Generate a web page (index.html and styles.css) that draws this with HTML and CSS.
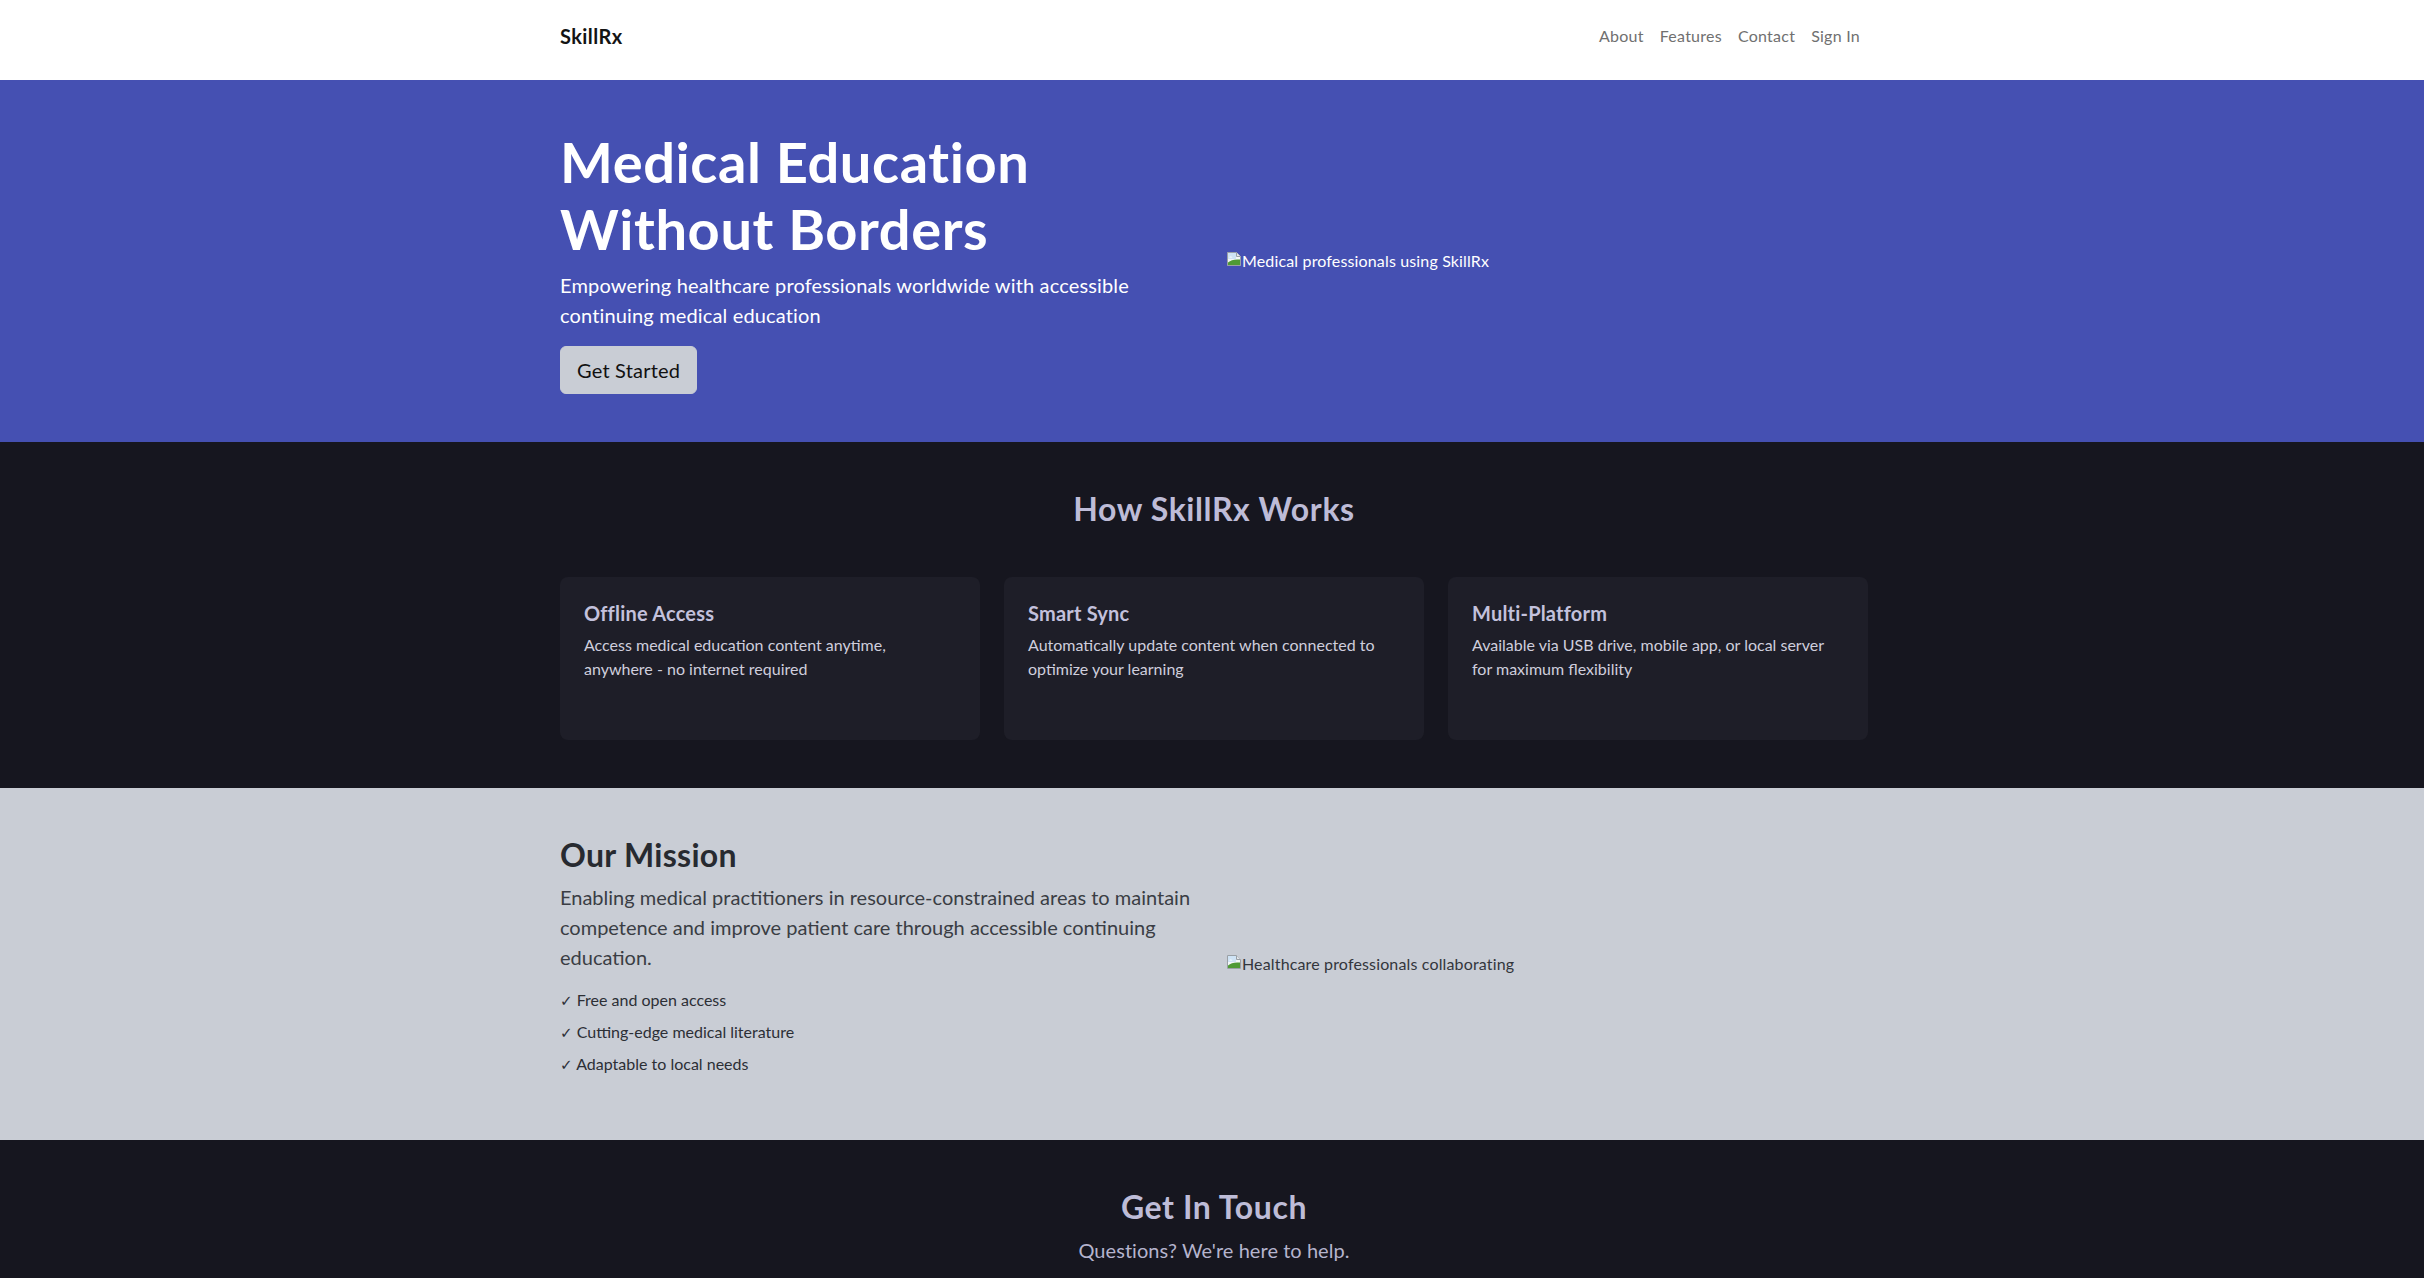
FILE: index.html
```html
<!DOCTYPE html>
<html lang="en">
<head>
<meta charset="utf-8">
<title>SkillRx</title>
<link rel="stylesheet" href="styles.css">
</head>
<body>
<nav class="navbar">
  <div class="container nav-inner">
    <a class="brand" href="#">SkillRx</a>
    <div class="nav-links">
      <a class="nav-link" href="#">About</a>
      <a class="nav-link" href="#">Features</a>
      <a class="nav-link" href="#">Contact</a>
      <a class="nav-link" href="#">Sign In</a>
    </div>
  </div>
</nav>

<section class="hero">
  <div class="container split">
    <div class="col">
      <h1 class="hero-title">Medical Education Without Borders</h1>
      <p class="lead hero-lead">Empowering healthcare professionals worldwide with accessible continuing medical education</p>
      <a class="btn-lg" href="#">Get Started</a>
    </div>
    <div class="col media">
      <span class="broken-img">
        <svg class="broken-icon" width="16" height="16" viewBox="0 0 16 16">
          <path d="M1.5 1.5h9l4 4v9h-13z" fill="#f4f6f8" stroke="#9aa0a6"/>
          <path d="M10.5 1.5v4h4" fill="#e3e6ea" stroke="#9aa0a6"/>
          <rect x="2" y="2" width="8" height="6" fill="#cfe3f5"/>
          <path d="M3 6.5c1-1.5 2.5-1.5 3.5 0z" fill="#fff"/>
          <path d="M2 14V11.5c3-2.5 6-3.5 12-3v5.5z" fill="#4f9a35"/>
        </svg>Medical professionals using SkillRx</span>
    </div>
  </div>
</section>

<section class="works">
  <div class="container">
    <h2 class="section-title light">How SkillRx Works</h2>
    <div class="cards">
      <div class="card">
        <h3 class="card-title">Offline Access</h3>
        <p class="card-text">Access medical education content anytime, anywhere - no internet required</p>
      </div>
      <div class="card">
        <h3 class="card-title">Smart Sync</h3>
        <p class="card-text">Automatically update content when connected to optimize your learning</p>
      </div>
      <div class="card">
        <h3 class="card-title">Multi-Platform</h3>
        <p class="card-text">Available via USB drive, mobile app, or local server for maximum flexibility</p>
      </div>
    </div>
  </div>
</section>

<section class="mission">
  <div class="container split">
    <div class="col">
      <h2 class="mission-title">Our Mission</h2>
      <p class="lead mission-lead">Enabling medical practitioners in resource-constrained areas to maintain competence and improve patient care through accessible continuing education.</p>
      <ul class="checks">
        <li><span class="tick">✓</span> Free and open access</li>
        <li><span class="tick">✓</span> Cutting-edge medical literature</li>
        <li><span class="tick">✓</span> Adaptable to local needs</li>
      </ul>
    </div>
    <div class="col media">
      <span class="broken-img dark-alt">
        <svg class="broken-icon" width="16" height="16" viewBox="0 0 16 16">
          <path d="M1.5 1.5h9l4 4v9h-13z" fill="#f4f6f8" stroke="#9aa0a6"/>
          <path d="M10.5 1.5v4h4" fill="#e3e6ea" stroke="#9aa0a6"/>
          <rect x="2" y="2" width="8" height="6" fill="#cfe3f5"/>
          <path d="M3 6.5c1-1.5 2.5-1.5 3.5 0z" fill="#fff"/>
          <path d="M2 14V11.5c3-2.5 6-3.5 12-3v5.5z" fill="#4f9a35"/>
        </svg>Healthcare professionals collaborating</span>
    </div>
  </div>
</section>

<section class="contact">
  <div class="container center">
    <h2 class="section-title light">Get In Touch</h2>
    <p class="lead contact-lead">Questions? We're here to help.</p>
  </div>
</section>
</body>
</html>
```

FILE: styles.css
```css
* { box-sizing: border-box; }

html, body {
  margin: 0;
  padding: 0;
}

body {
  font-family: Lato, "Noto Sans", "DejaVu Sans", sans-serif;
  font-size: 16px;
  line-height: 1.5;
  color: #212529;
  background: #16161f;
}

a { text-decoration: none; }

h1, h2, h3, p, ul { margin: 0; }

.container {
  max-width: 1312px;
  margin: 0 auto;
  padding-left: 4px;
}

/* NAV */
.navbar {
  background: #ffffff;
  padding: 16px 0 24px;
}

.nav-inner {
  display: flex;
  align-items: center;
  justify-content: space-between;
}

.brand {
  font-size: 20px;
  line-height: 30px;
  font-weight: 700;
  color: #141414;
  padding: 5px 0;
  letter-spacing: 0.4px;
}

.nav-links {
  display: flex;
}

.nav-link {
  font-size: 16px;
  line-height: 24px;
  padding: 8px;
  color: #707070;
  letter-spacing: 0.25px;
}

/* HERO */
.hero {
  background: #4550b2;
  color: #ffffff;
  padding: 48px 0;
}

.split {
  display: grid;
  grid-template-columns: 1fr 1fr;
  column-gap: 24px;
  align-items: center;
}

.hero-title {
  font-size: 56px;
  line-height: 1.2;
  font-weight: 700;
  margin-bottom: 8px;
  letter-spacing: 0.6px;
}

.lead {
  font-size: 20px;
  line-height: 30px;
  font-weight: 400;
  letter-spacing: 0.15px;
}

.hero-lead {
  margin-bottom: 16px;
  color: #ffffff;
}

.btn-lg {
  display: inline-block;
  font-size: 20px;
  line-height: 30px;
  padding: 8px 16px;
  border: 1px solid #c9cdd5;
  border-radius: 6px;
  background: #c9cdd5;
  color: #111111;
  letter-spacing: 0.2px;
}

.media {
  font-size: 16px;
  line-height: 24px;
  letter-spacing: 0.15px;
}

.broken-img {
  display: inline-flex;
  align-items: center;
  color: #ffffff;
}

.broken-icon {
  display: block;
  flex: none;
  margin-top: -4px;
}

.dark-alt {
  color: #33363c;
}

/* WORKS */
.works {
  background: #16161f;
  padding: 48px 0;
}

.section-title {
  font-size: 32px;
  line-height: 1.2;
  font-weight: 700;
  text-align: center;
  letter-spacing: 0.6px;
}

.light {
  color: #bebcd7;
}

.cards {
  margin-top: 48px;
  display: grid;
  grid-template-columns: repeat(3, 1fr);
  gap: 24px;
}

.card {
  background: #1e1e28;
  border-radius: 8px;
  padding: 24px;
  min-height: 163px;
}

.card-title {
  font-size: 20px;
  line-height: 1.2;
  font-weight: 700;
  color: #c3c1dc;
  margin-bottom: 8px;
  letter-spacing: 0.2px;
}

.card-text {
  font-size: 16px;
  line-height: 24px;
  color: #cfcedd;
}

/* MISSION */
.mission {
  background: #c9cdd5;
  padding: 48px 0;
}

.mission-title {
  font-size: 32px;
  line-height: 1.2;
  font-weight: 700;
  color: #272a30;
  margin-bottom: 8px;
  letter-spacing: 0.3px;
}

.mission-lead {
  color: #3a3d44;
  margin-bottom: 16px;
  letter-spacing: 0;
}

.checks {
  list-style: none;
  padding: 0;
  margin-bottom: 16px;
  color: #2c2f35;
}

.checks li {
  font-size: 16px;
  line-height: 24px;
  height: 24px;
  margin-bottom: 8px;
}

.tick {
  font-family: "DejaVu Sans", sans-serif;
  font-weight: 700;
  font-size: 15px;
  line-height: 1;
}

/* CONTACT */
.contact {
  background: #16161f;
  padding: 48px 0 120px;
}

.center {
  text-align: center;
}

.contact-lead {
  margin-top: 8px;
  color: #b5b4cd;
  letter-spacing: 0.05px;
}
```
